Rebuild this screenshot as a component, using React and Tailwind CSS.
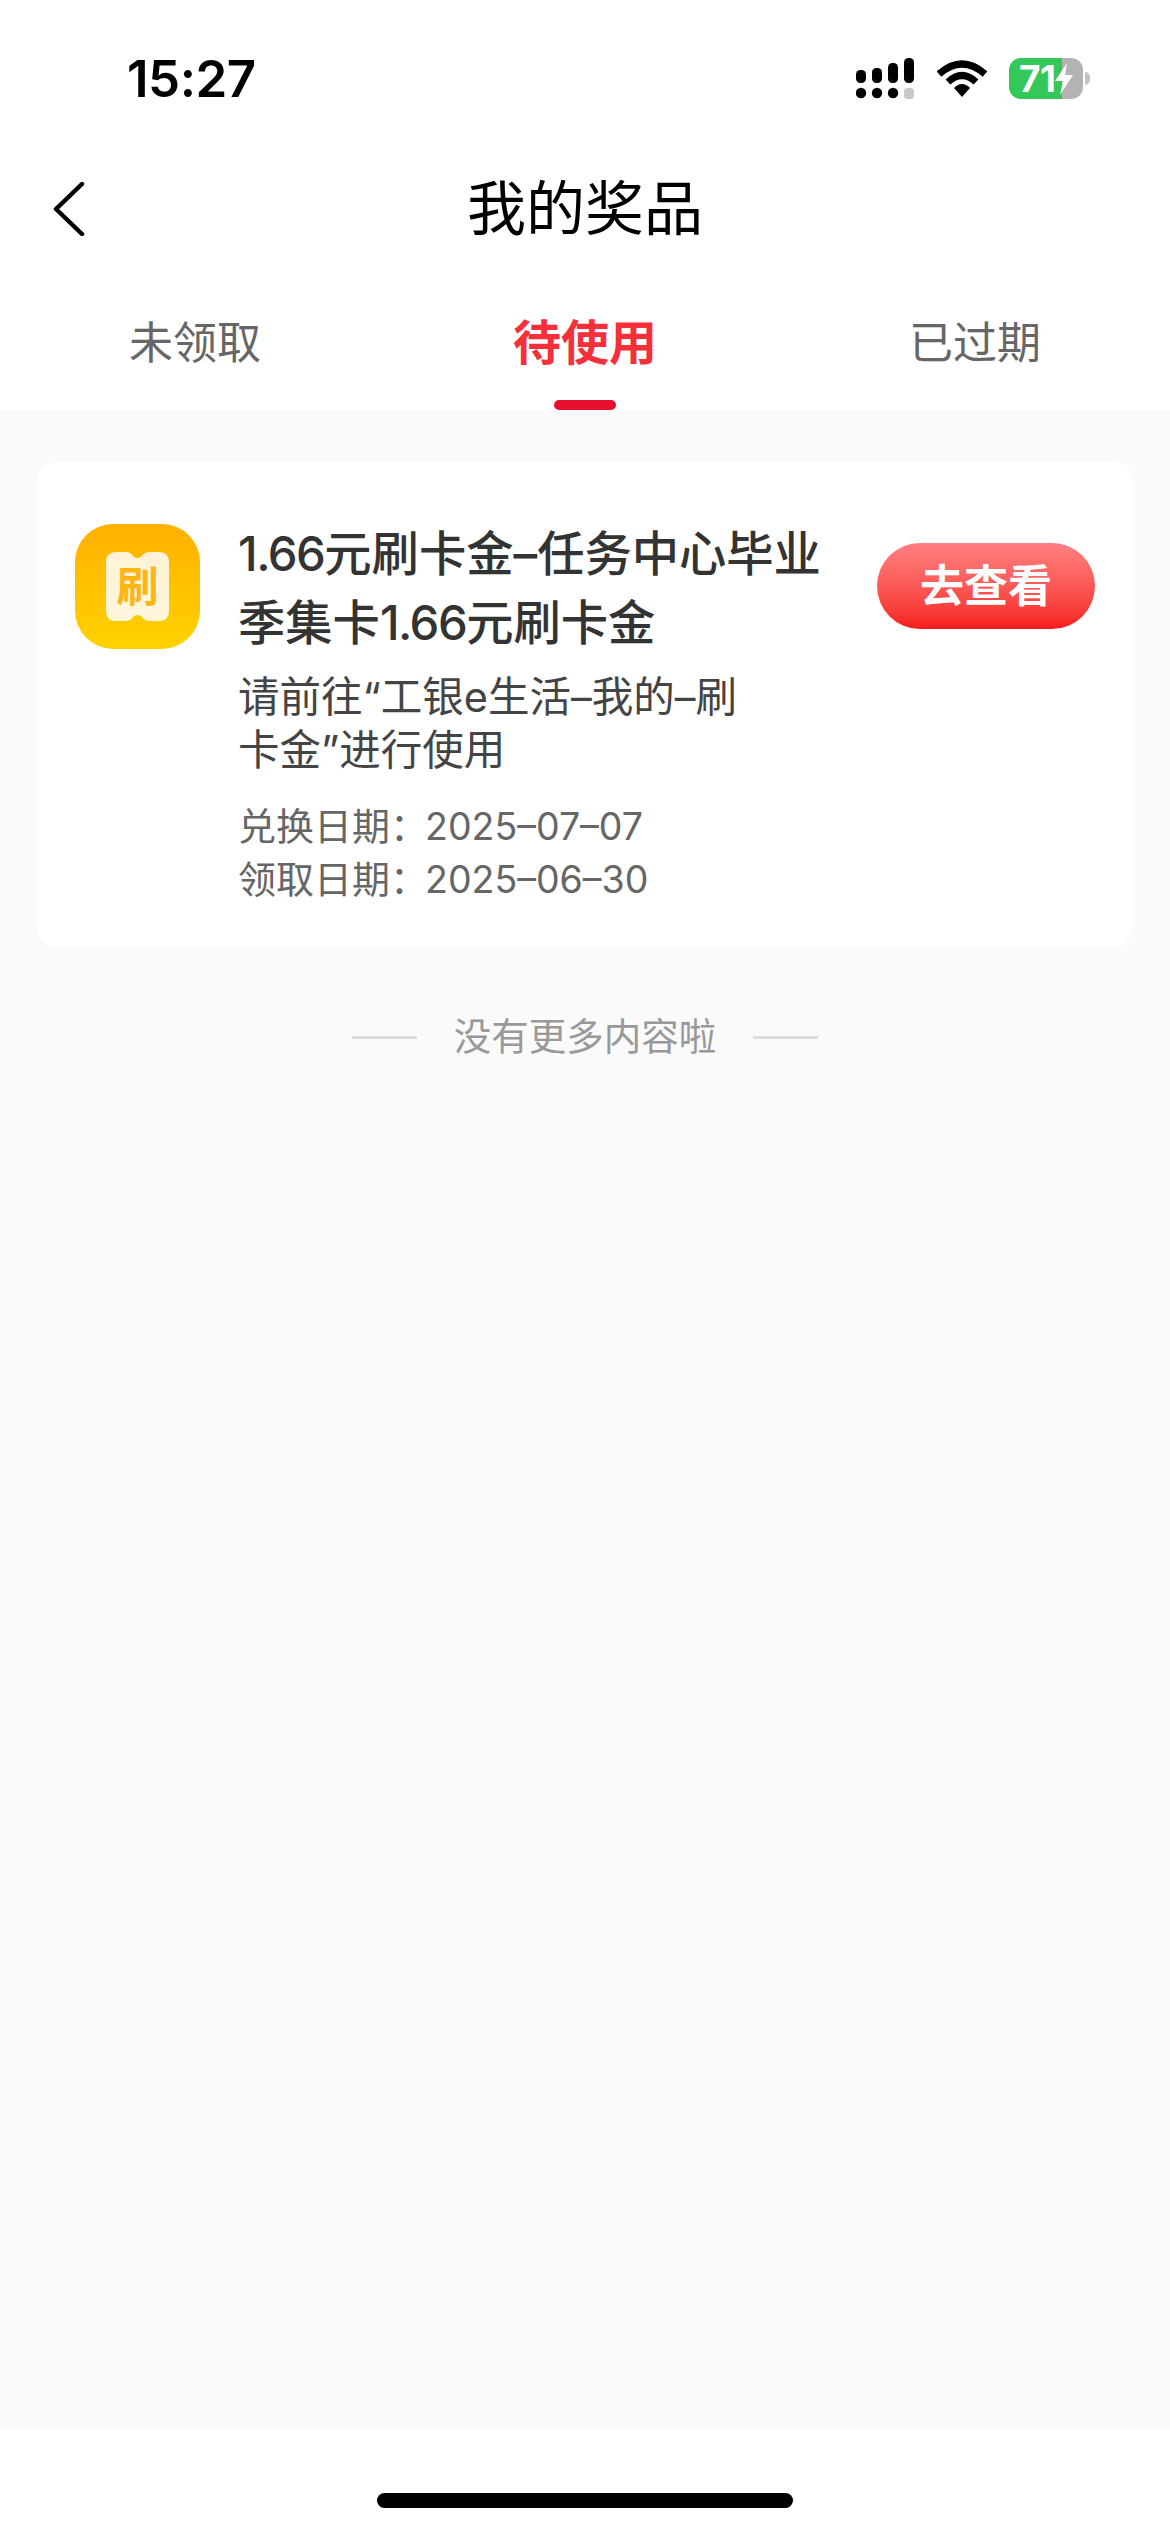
export default function App() {
  const font = { fontFamily: '"Inter", "Noto Sans CJK SC", sans-serif' };
  return (
    <div lang="zh-CN" style={font} className="flex min-h-[2532px] w-[1170px] flex-col bg-white">
      <header className="bg-white">
        <div className="flex h-[157px] items-center justify-between pl-[127px] pr-[80px]">
          <span className="text-[51px] font-semibold leading-[60px] text-black tracking-[-0.5px]">15:27</span>
          <div className="flex items-center">
            <svg width="58" height="42" viewBox="0 0 58 42" className="mr-[23px]">
              <g fill="#000">
                <rect x="0" y="12" width="10" height="13" rx="4.5" />
                <rect x="16" y="10" width="10" height="15" rx="4.5" />
                <rect x="32" y="5" width="10" height="20" rx="4.5" />
                <rect x="48" y="0" width="10" height="25" rx="4.5" />
                <circle cx="5" cy="35" r="5.2" />
                <circle cx="21" cy="35" r="5.2" />
                <circle cx="37" cy="35" r="5.2" />
              </g>
              <rect x="48" y="30" width="10" height="11" rx="3.5" fill="#c9c9c9" />
            </svg>
            <svg width="50" height="38" viewBox="0 0 50 38" className="mr-[22px]">
              <path d="M2 14 Q25 -6 48 14" fill="none" stroke="#000" strokeWidth="7" />
              <path d="M11 22 Q25 9 39 22" fill="none" stroke="#000" strokeWidth="7" />
              <path d="M17 28 Q25 20 33 28 L25 37 Z" fill="#000" />
            </svg>
            <div className="flex h-[41px] w-[74px] items-center rounded-[12px] bg-[linear-gradient(90deg,#34c759_71%,#b3b3b3_71%)] pl-[10px]">
              <span className="text-[37px] font-bold leading-[41px] text-white tracking-[-0.5px]">71</span>
              <svg width="20" height="32" viewBox="0 0 20 32" className="ml-[-1px]">
                <path d="M13 0 L1 18 H9 L6 32 L19 12 H11 Z" fill="#fff" />
              </svg>
            </div>
            <div className="ml-[2px] h-[13px] w-[5px] rounded-r-full bg-[#c4c4c4]" />
          </div>
        </div>
        <div className="grid h-[104px] grid-cols-[1fr_auto_1fr] items-center">
          <div className="pl-[53px]">
            <svg width="32" height="54" viewBox="0 0 32 54" className="block">
              <path d="M29 2 L3 27 L29 52" fill="none" stroke="#000" strokeWidth="4.5" strokeLinecap="round" strokeLinejoin="round" />
            </svg>
          </div>
          <h1 className="text-[59px] font-normal leading-[70px] text-black">我的奖品</h1>
          <div />
        </div>
        <nav className="grid grid-cols-3">
          <div className="flex flex-col items-center pt-[52px]">
            <span className="text-[44px] leading-[60px] text-[#666666]">未领取</span>
            <div className="mt-[27px] h-[10px]" />
          </div>
          <div className="flex flex-col items-center pt-[52px]">
            <span className="text-[48px] font-bold leading-[60px] text-[#f5303a]">待使用</span>
            <div className="mt-[27px] h-[10px] w-[62px] rounded-full bg-[#e60f2d]" />
          </div>
          <div className="flex flex-col items-center pt-[52px]">
            <span className="text-[44px] leading-[60px] text-[#666666]">已过期</span>
            <div className="mt-[27px] h-[10px]" />
          </div>
        </nav>
      </header>

      <main className="flex h-[2018px] flex-col bg-[#fafafa] px-[37px] pt-[52px]">
        <section className="flex h-[485px] items-start rounded-[20px] bg-white pl-[38px] pr-[38px] pt-[57px]">
          <div className="relative mt-[5px] flex h-[125px] w-[125px] shrink-0 items-center justify-center rounded-[38px] bg-gradient-to-b from-[#ffb000] to-[#ffd200]">
            <svg width="63" height="69" viewBox="0 0 63 69">
              <defs>
                <linearGradient id="ticket" x1="0" y1="0" x2="0" y2="1">
                  <stop offset="0" stopColor="#fff2d6" />
                  <stop offset="1" stopColor="#fff6dc" />
                </linearGradient>
              </defs>
              <path d="M10 0 H19 Q25 0 27 4 Q31.5 8 36 4 Q38 0 44 0 H53 Q63 0 63 10 V59 Q63 69 53 69 H44 Q38 69 36 65 Q31.5 61 27 65 Q25 69 19 69 H10 Q0 69 0 59 V10 Q0 0 10 0 Z" fill="url(#ticket)" />
            </svg>
            <span className="absolute inset-0 flex items-center justify-center text-[42px] font-bold leading-none text-[#fdb515]">刷</span>
          </div>
          <div className="ml-[38px] w-[592px] shrink-0">
            <h2 className="text-[47.3px] font-medium leading-[69px] text-[#333333]">
              <span className="tracking-[-1.5px]">1.66</span>元刷卡金–任务中心毕业季集卡<span className="tracking-[-1.5px]">1.66</span>元刷卡金
            </h2>
            <p className="mt-[14px] w-[525px] text-[41.5px] leading-[53px] text-[#444444]">请前往“工银e生活–我的–刷卡金”进行使用</p>
            <div className="mt-[23px] text-[38px] leading-[53px] text-[#666666]">
              <p className="flex">
                <span>兑换日期：</span>
                <span className="ml-[-3px] text-[37.5px]">2025–07–07</span>
              </p>
              <p className="flex">
                <span>领取日期：</span>
                <span className="ml-[-3px] text-[37.5px]">2025–06–30</span>
              </p>
            </div>
          </div>
          <button className="ml-auto mt-[24px] flex h-[86px] w-[218px] shrink-0 items-center justify-center rounded-full bg-gradient-to-b from-[#ff7f82] to-[#f51a1c] text-[44px] font-bold leading-none text-white">去查看</button>
        </section>
        <div className="mt-[60px] flex items-center justify-center">
          <div className="h-[3px] w-[65px] bg-[#dddddd]" />
          <span className="mx-[37px] text-[37.5px] leading-[60px] text-[#999999]">没有更多内容啦</span>
          <div className="h-[3px] w-[65px] bg-[#dddddd]" />
        </div>
      </main>

      <footer className="flex h-[104px] justify-center bg-white pt-[65px]">
        <div className="h-[15px] w-[416px] rounded-full bg-black" />
      </footer>
    </div>
  );
}
